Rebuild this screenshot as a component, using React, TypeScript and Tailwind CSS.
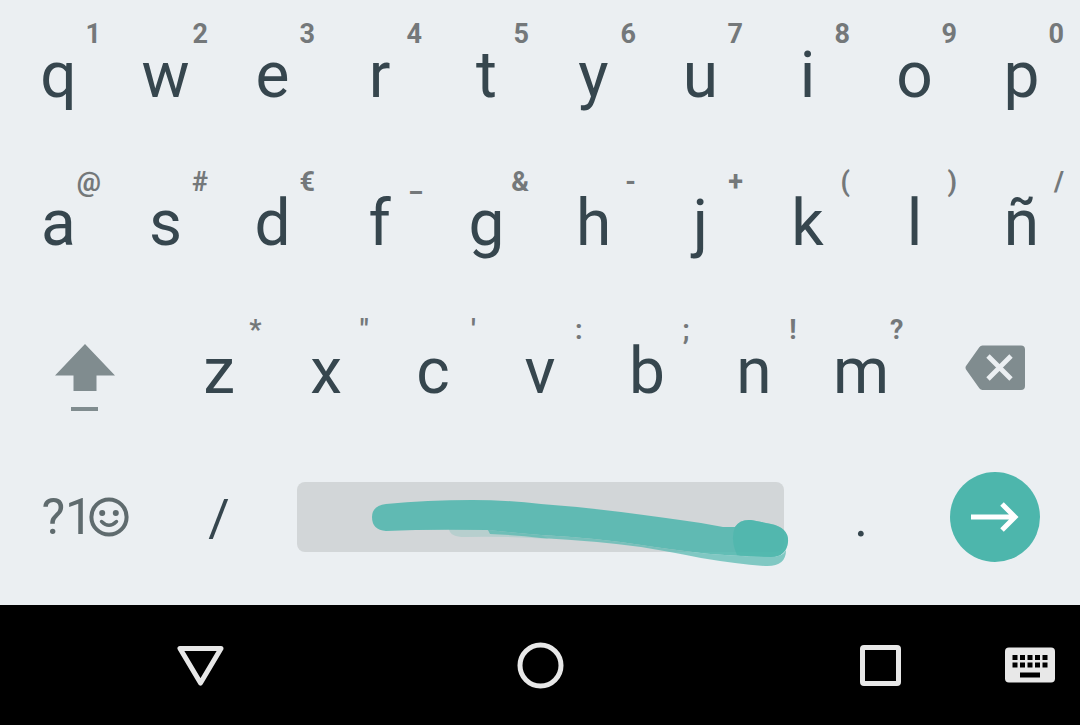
type KeyDef = { label: string; hint: string };

const makeRow = (letters: string, hints: string): KeyDef[] =>
  letters.split('').map((label, i) => ({ label, hint: hints[i] }));

const topRow = makeRow('qwertyuiop', '1234567890');
const homeRow = makeRow('asdfghjklñ', '@#€_&-+()/');
const bottomRow = makeRow('zxcvbnm', '*"\':;!?');

const row = 'grid h-37 grid-cols-20';
const center = 'flex items-center justify-center';

function LetterKey({ label, hint }: KeyDef) {
  return (
    <button className={`relative col-span-2 pt-1 text-[64px] leading-none text-[#36464e] ${center}`}>
      {label}
      <span className="absolute top-4.5 right-[11px] text-[27px] leading-8 font-bold text-[#74787a]">
        {hint}
      </span>
    </button>
  );
}

function ShiftIcon() {
  return (
    <svg viewBox="0 0 60 84" className="h-21 w-15" fill="#808c8f">
      <path d="M30 16 60 47.5H41.5V63h-23V47.5H0z" />
      <path d="M16 79h27v4H16z" />
    </svg>
  );
}

function BackspaceIcon() {
  return (
    <svg viewBox="0 0 60 50" className="h-12.5 w-15">
      <path
        d="M17.5.5H56a4 4 0 0 1 4 4V41a4 4 0 0 1-4 4H17.5q-2 0-3.2-1.7L1 24.5q-1-1.7 0-3.4L14.3 2.2Q15.5.5 17.5.5z"
        fill="#808c8f"
      />
      <path d="m23 11 23 23m0-23-23 23" stroke="#ebeff2" strokeWidth="4.8" />
    </svg>
  );
}

function SmileyIcon() {
  return (
    <svg viewBox="0 0 40 40" className="-ml-1 size-10 shrink-0" fill="none" stroke="#5f6b6e">
      <circle cx="20" cy="20" r="17.6" strokeWidth="4" />
      <circle cx="13.2" cy="16" r="3" fill="#5f6b6e" stroke="none" />
      <circle cx="26.8" cy="16" r="3" fill="#5f6b6e" stroke="none" />
      <path d="M12.5 24.5q7.5 7.5 15 0" strokeWidth="3.4" strokeLinecap="round" />
    </svg>
  );
}

// Gesture trail left by swiping along the space bar
function SwipeTrail() {
  return (
    <svg
      viewBox="0 0 487 70"
      className="pointer-events-none absolute inset-0 h-full w-full overflow-visible"
      fill="#4db6ac"
    >
      <path d="M152 47q1 8 16 8 40-1 84 2l-8-4-54-5z" opacity=".2" />
      <path
        d="M191 48 193 52Q220 53 244 56 300 59 344 65 380 71 404 76 440 82 468 84 489 85 489 68 486 75 474 75 430 74 404 71 370 67 344 63 300 56 244 53 210 50 191 48z"
        opacity=".68"
      />
      <path
        d="M89 22Q130 18 175 18 210 18 244 22 285 25 324 30 370 36 404 41L426 45H438Q443 37 454 38L474 42Q492 46 491 60 489 75 474 75 430 74 404 71 370 67 344 63 300 56 244 53 210 50 190 48 130 47 89 49 75 48 75 35 75 24 89 22z"
        opacity=".86"
      />
      <path
        d="M438 45Q443 37 454 38L474 42Q492 46 491 60 489 75 474 75 455 75 440 73 433 57 438 45z"
        opacity=".7"
      />
    </svg>
  );
}

function NavBar() {
  return (
    <nav className="grid h-30 grid-cols-[5fr_10fr_24fr_10fr_5fr] bg-black">
      <button aria-label="Back" className={`col-start-2 ${center}`}>
        <svg viewBox="0 0 48 48" className="size-12" fill="none" stroke="#e8e8e8">
          <path d="M4 7.5h41L24.5 42z" strokeWidth="5" strokeLinejoin="round" />
        </svg>
      </button>
      <button aria-label="Home" className={center}>
        <svg viewBox="0 0 48 48" className="size-12" fill="none" stroke="#e8e8e8">
          <circle cx="24.5" cy="24.5" r="20.5" strokeWidth="5" />
        </svg>
      </button>
      <button aria-label="Recent apps" className={center}>
        <svg viewBox="0 0 48 48" className="size-12" fill="none" stroke="#e8e8e8">
          <rect x="6.5" y="6.5" width="36" height="36" rx="1.5" strokeWidth="5" />
        </svg>
      </button>
      <button aria-label="Choose input method" className={center}>
        <svg viewBox="0 0 50 36" className="h-9 w-12.5">
          <rect y=".5" width="50" height="35" rx="4" fill="#e8e8e8" />
          {[8, 15.5].map((y) =>
            [7.5, 15, 22.5, 30, 37.5].map((x) => (
              <rect key={`${x}-${y}`} x={x} y={y} width="5" height="5" />
            ))
          )}
          <rect x="15" y="25.5" width="20" height="5" />
        </svg>
      </button>
    </nav>
  );
}

export default function App() {
  return (
    <main className="font-['Roboto',sans-serif]">
      <div className="bg-[#ebeff2] px-[5px] pb-[15px]">
        <div className={row}>
          {topRow.map((key) => (
            <LetterKey key={key.label} {...key} />
          ))}
        </div>
        <div className={row}>
          {homeRow.map((key) => (
            <LetterKey key={key.label} {...key} />
          ))}
        </div>
        <div className={row}>
          <button aria-label="Shift" className={`col-span-3 ${center}`}>
            <ShiftIcon />
          </button>
          {bottomRow.map((key) => (
            <LetterKey key={key.label} {...key} />
          ))}
          <button aria-label="Backspace" className={`col-span-3 ${center}`}>
            <BackspaceIcon />
          </button>
        </div>
        <div className="grid h-[146px] grid-cols-20">
          <button className={`col-span-3 text-[50px] leading-none text-[#5f6b6e] ${center}`}>
            ?1
            <SmileyIcon />
          </button>
          <button className={`col-span-2 pt-1 text-[52px] leading-none text-[#36464e] ${center}`}>/</button>
          <div className="col-span-10 flex items-center px-6">
            <button aria-label="Space" className="relative h-[70px] w-full rounded-lg bg-[#d2d6d8]">
              <SwipeTrail />
            </button>
          </div>
          <button className={`col-span-2 pt-1 text-[52px] leading-none text-[#36464e] ${center}`}>.</button>
          <div className={`col-span-3 ${center}`}>
            <button aria-label="Enter" className={`size-[90px] rounded-full bg-[#4db6ac] ${center}`}>
              <svg viewBox="0 0 48 32" className="h-8 w-12" fill="none" stroke="#fff">
                <path d="M0 16h44M31 3l13 13-13 13" strokeWidth="5" />
              </svg>
            </button>
          </div>
        </div>
      </div>
      <NavBar />
    </main>
  );
}
